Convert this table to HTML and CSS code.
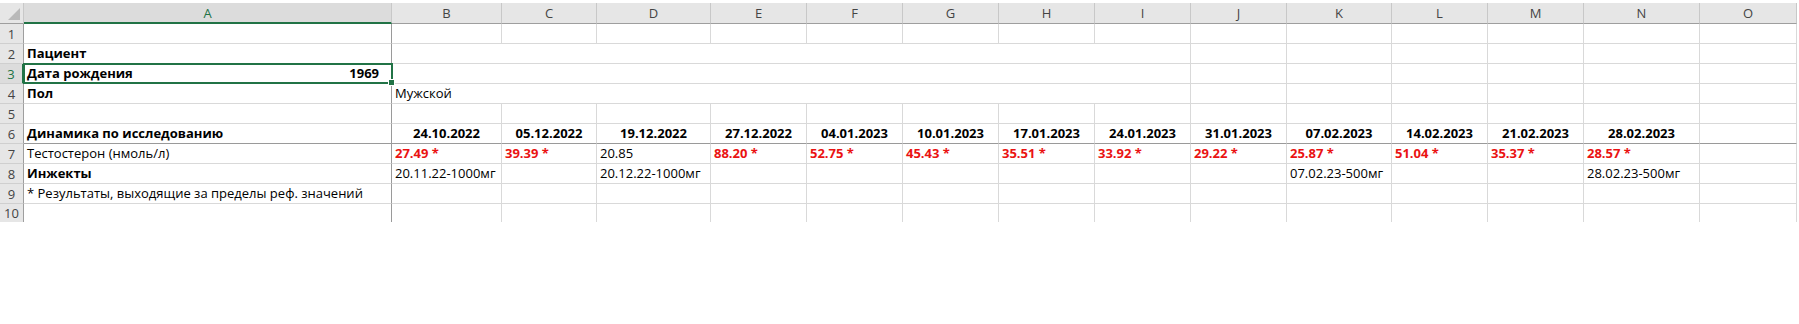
FILE: index.html
```html
<!DOCTYPE html>
<html lang="ru">
<head>
<meta charset="utf-8">
<title>Динамика</title>
<link rel="stylesheet" href="styles.css">
</head>
<body>
<div class="sheet">
  <div class="hd corner"><span class="tri"></span></div>
  <div class="hd col sel-col">A</div>
  <div class="hd col">B</div>
  <div class="hd col">C</div>
  <div class="hd col">D</div>
  <div class="hd col">E</div>
  <div class="hd col">F</div>
  <div class="hd col">G</div>
  <div class="hd col">H</div>
  <div class="hd col">I</div>
  <div class="hd col">J</div>
  <div class="hd col">K</div>
  <div class="hd col">L</div>
  <div class="hd col">M</div>
  <div class="hd col">N</div>
  <div class="hd col">O</div>

  <!-- row 1 -->
  <div class="rn">1</div>
  <div class="c a"></div><div class="c"></div><div class="c"></div><div class="c"></div><div class="c"></div><div class="c"></div><div class="c"></div><div class="c"></div><div class="c"></div><div class="c"></div><div class="c"></div><div class="c"></div><div class="c"></div><div class="c"></div><div class="c"></div>

  <!-- row 2 -->
  <div class="rn">2</div>
  <div class="c a b">Пациент</div>
  <div class="c span8"></div>
  <div class="c"></div><div class="c"></div><div class="c"></div><div class="c"></div><div class="c"></div><div class="c"></div>

  <!-- row 3 -->
  <div class="rn sel-row">3</div>
  <div class="c a b selected"><span class="grow">Дата рождения</span><span class="num">1969</span></div>
  <div class="c span8"></div>
  <div class="c"></div><div class="c"></div><div class="c"></div><div class="c"></div><div class="c"></div><div class="c"></div>

  <!-- row 4 -->
  <div class="rn">4</div>
  <div class="c a b">Пол</div>
  <div class="c span8">Мужской</div>
  <div class="c"></div><div class="c"></div><div class="c"></div><div class="c"></div><div class="c"></div><div class="c"></div>

  <!-- row 5 -->
  <div class="rn">5</div>
  <div class="c a"></div><div class="c"></div><div class="c"></div><div class="c"></div><div class="c"></div><div class="c"></div><div class="c"></div><div class="c"></div><div class="c"></div><div class="c"></div><div class="c"></div><div class="c"></div><div class="c"></div><div class="c"></div><div class="c"></div>

  <!-- row 6 -->
  <div class="rn">6</div>
  <div class="c a b r6">Динамика по исследованию</div>
  <div class="c b r6 ctr">24.10.2022</div>
  <div class="c b r6 ctr">05.12.2022</div>
  <div class="c b r6 ctr">19.12.2022</div>
  <div class="c b r6 ctr">27.12.2022</div>
  <div class="c b r6 ctr">04.01.2023</div>
  <div class="c b r6 ctr">10.01.2023</div>
  <div class="c b r6 ctr">17.01.2023</div>
  <div class="c b r6 ctr">24.01.2023</div>
  <div class="c b r6 ctr">31.01.2023</div>
  <div class="c b r6 ctr">07.02.2023</div>
  <div class="c b r6 ctr">14.02.2023</div>
  <div class="c b r6 ctr">21.02.2023</div>
  <div class="c b r6 ctr">28.02.2023</div>
  <div class="c r6"></div>

  <!-- row 7 -->
  <div class="rn">7</div>
  <div class="c a">Тестостерон (нмоль/л)</div>
  <div class="c red">27.49 *</div>
  <div class="c red">39.39 *</div>
  <div class="c">20.85</div>
  <div class="c red">88.20 *</div>
  <div class="c red">52.75 *</div>
  <div class="c red">45.43 *</div>
  <div class="c red">35.51 *</div>
  <div class="c red">33.92 *</div>
  <div class="c red">29.22 *</div>
  <div class="c red">25.87 *</div>
  <div class="c red">51.04 *</div>
  <div class="c red">35.37 *</div>
  <div class="c red">28.57 *</div>
  <div class="c"></div>

  <!-- row 8 -->
  <div class="rn">8</div>
  <div class="c a b">Инжекты</div>
  <div class="c">20.11.22-1000мг</div>
  <div class="c"></div>
  <div class="c">20.12.22-1000мг</div>
  <div class="c"></div><div class="c"></div><div class="c"></div><div class="c"></div><div class="c"></div><div class="c"></div>
  <div class="c">07.02.23-500мг</div>
  <div class="c"></div><div class="c"></div>
  <div class="c">28.02.23-500мг</div>
  <div class="c"></div>

  <!-- row 9 -->
  <div class="rn">9</div>
  <div class="c a">* Результаты, выходящие за пределы реф. значений</div>
  <div class="c"></div><div class="c"></div><div class="c"></div><div class="c"></div><div class="c"></div><div class="c"></div><div class="c"></div><div class="c"></div><div class="c"></div><div class="c"></div><div class="c"></div><div class="c"></div><div class="c"></div><div class="c"></div>

  <!-- row 10 -->
  <div class="rn last">10</div>
  <div class="c a last"></div><div class="c last"></div><div class="c last"></div><div class="c last"></div><div class="c last"></div><div class="c last"></div><div class="c last"></div><div class="c last"></div><div class="c last"></div><div class="c last"></div><div class="c last"></div><div class="c last"></div><div class="c last"></div><div class="c last"></div><div class="c last"></div>
</div>
</body>
</html>
```
FILE: styles.css
```css
html, body {
  margin: 0;
  padding: 0;
  background: #ffffff;
}
body {
  font-family: "Open Sans", "Liberation Sans", sans-serif;
  font-size: 13px;
  color: #000;
}
.sheet {
  margin-top: 3px;
  display: grid;
  grid-template-columns: 24px 368px 110px 95px 114px 96px 96px 96px 96px 96px 96px 105px 96px 96px 116px 97px;
  grid-template-rows: 21px repeat(9, 20px) 18px;
  width: 1797px;
}
.hd {
  box-sizing: border-box;
  background: #e6e6e6;
  border-bottom: 1px solid #9e9e9e;
  color: #444;
  font-size: 13px;
  display: flex;
  align-items: center;
  justify-content: center;
}
.col {
  border-right: 1px solid #c8c8c8;
}
.corner {
  position: relative;
  border-right: 1px solid #c8c8c8;
}
.tri {
  position: absolute;
  right: 3px;
  bottom: 3px;
  width: 0;
  height: 0;
  border-left: 12px solid transparent;
  border-bottom: 12px solid #b9b9b9;
}
.sel-col {
  background: #dcdcdc;
  color: #217346;
  border-bottom: 2px solid #217346;
}
.rn {
  box-sizing: border-box;
  background: #e6e6e6;
  border-right: 1px solid #9e9e9e;
  border-bottom: 1px solid #cfcfcf;
  color: #444;
  font-size: 13px;
  display: flex;
  align-items: center;
  justify-content: center;
}
.sel-row {
  background: #dcdcdc;
  color: #217346;
  border-right: 2px solid #217346;
}
.c {
  box-sizing: border-box;
  border-right: 1px solid #d9d9d9;
  border-bottom: 1px solid #d9d9d9;
  padding: 0 3px 0 3px;
  display: flex;
  align-items: center;
  white-space: nowrap;
  line-height: 19px;
}
.a {
  border-right: 1px solid #9a9a9a;
}
.b {
  font-weight: 700;
}
.ctr {
  justify-content: center;
}
.red {
  color: #ea1212;
  font-weight: 700;
}
.r6 {
  border-bottom: 1px solid #9a9a9a;
}
.last {
  border-bottom: none;
}
.span8 {
  grid-column: span 8;
}
.grow {
  flex: 1;
}
.num {
  padding-right: 9px;
}
.selected {
  position: relative;
}
.selected::after {
  content: "";
  position: absolute;
  left: -1px;
  top: -1px;
  right: -2px;
  bottom: -1px;
  border: 2px solid #217346;
  pointer-events: none;
}
.selected::before {
  content: "";
  position: absolute;
  right: -4px;
  bottom: -3px;
  width: 5px;
  height: 5px;
  background: #217346;
  border: 1px solid #fff;
  z-index: 2;
}
```
